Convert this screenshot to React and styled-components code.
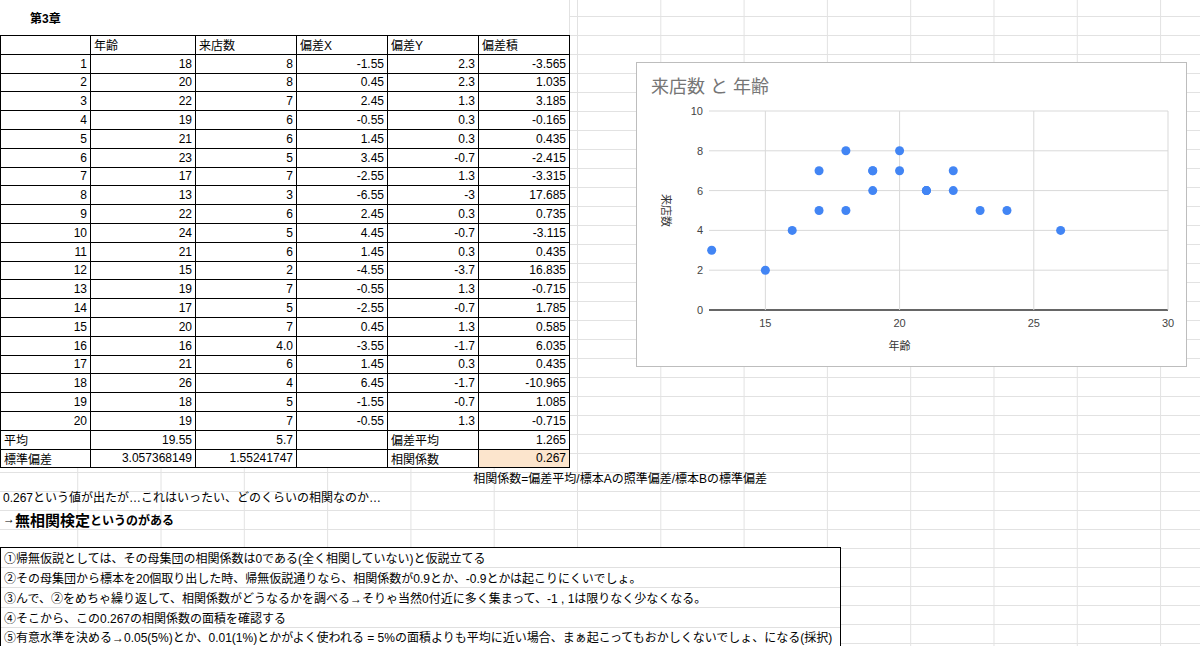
import React from "react";
import styled, { createGlobalStyle } from "styled-components";

const Global = createGlobalStyle`
  body { margin: 0; background: #fff; font-family: "Liberation Sans", "Noto Sans CJK JP", sans-serif; font-size: 12px; color: #000; }
`;

const ages = [18,20,22,19,21,23,17,13,22,24,21,15,19,17,20,16,21,26,18,19];
const visits = ["8","8","7","6","6","5","7","3","6","5","6","2","7","5","7","4.0","6","4","5","7"];
const dx = ["-1.55","0.45","2.45","-0.55","1.45","3.45","-2.55","-6.55","2.45","4.45","1.45","-4.55","-0.55","-2.55","0.45","-3.55","1.45","6.45","-1.55","-0.55"];
const dy = ["2.3","2.3","1.3","0.3","0.3","-0.7","1.3","-3","0.3","-0.7","0.3","-3.7","1.3","-0.7","1.3","-1.7","0.3","-1.7","-0.7","1.3"];
const pr = ["-3.565","1.035","3.185","-0.165","0.435","-2.415","-3.315","17.685","0.735","-3.115","0.435","16.835","-0.715","1.785","0.585","6.035","0.435","-10.965","1.085","-0.715"];

const Page = styled.div`
  position: relative;
  width: 1200px;
  height: 646px;
  overflow: hidden;
  background-image:
    linear-gradient(to right, #e2e2e2 1px, transparent 1px),
    linear-gradient(to bottom, #e2e2e2 1px, transparent 1px);
  background-size: 83.3px 19px, 100% 19px;
  background-position: 577px 0, 0 -3px;
`;
const TitleRow = styled.div`
  height: 35px;
  display: flex;
  align-items: center;
  padding-left: 30px;
  font-weight: bold;
  font-size: 12px;
  background: #fff;
  width: 539px;
  border-right: 1px solid #e2e2e2;
`;
const Table = styled.div`
  display: grid;
  grid-template-columns: 90px 105px 101px 91px 91px 91px;
  grid-auto-rows: 18.8px;
  border-top: 1px solid #000;
  border-left: 1px solid #000;
  width: fit-content;
  background: #fff;
`;
const Cell = styled.div`
  border-right: 1px solid #000;
  border-bottom: 1px solid #000;
  padding: 0 3px;
  display: flex;
  align-items: center;
  justify-content: ${p => (p.$left ? "flex-start" : "flex-end")};
  background: ${p => p.$bg || "#fff"};
  white-space: nowrap;
  overflow: hidden;
  font-size: 12px;
`;
const Line = styled.div`
  height: ${p => p.$h || 19}px;
  display: flex;
  align-items: center;
  padding-left: ${p => p.$pl ?? 3}px;
  width: ${p => p.$w || "auto"};
  justify-content: ${p => (p.$right ? "flex-end" : "flex-start")};
  font-size: 12px;
  white-space: nowrap;
`;
const Big = styled.span`
  font-weight: bold;
  font-size: 15px;
`;
const Small = styled.span`
  font-weight: bold;
  font-size: 12px;
`;
const Box = styled.div`
  margin-top: 15px;
  width: 839px;
  border: 1px solid #000;
  background: #fff;
`;
const BoxRow = styled.div`
  height: 18.8px;
  display: flex;
  align-items: center;
  padding-left: 3px;
  border-bottom: 1px solid #e0e0e0;
  &:last-child { border-bottom: none; }
  white-space: nowrap;
`;
const ChartCard = styled.div`
  position: absolute;
  left: 636px;
  top: 62px;
  width: 549px;
  height: 303px;
  background: #fff;
  border: 1px solid #bdbdbd;
`;

const X0 = 708, X1 = 1167, XMIN = 12.9, XMAX = 30;
const Y0 = 309, Y1 = 110;
const sx = v => X0 - 636 + ((v - XMIN) / (XMAX - XMIN)) * (X1 - X0);
const sy = v => Y0 - 62 - (v / 10) * (Y0 - Y1);

function Chart() {
  const ys = [0, 2, 4, 6, 8, 10];
  const xs = [15, 20, 25, 30];
  return (
    <ChartCard>
      <svg width="549" height="303" style={{ display: "block" }}>
        <text x="14" y="30" fontSize="18" fill="#757575" fontFamily="Liberation Sans, Noto Sans CJK JP, sans-serif">来店数 と 年齢</text>
        {ys.map(v => (
          <g key={v}>
            <line x1={X0 - 636} x2={X1 - 636} y1={sy(v)} y2={sy(v)} stroke={v === 0 ? "#333" : "#d9d9d9"} strokeWidth={v === 0 ? 1.5 : 1} />
            <text x={X0 - 642} y={sy(v) + 4} fontSize="11" textAnchor="end" fill="#444" fontFamily="Liberation Sans, sans-serif">{v}</text>
          </g>
        ))}
        {xs.map(v => (
          <g key={v}>
            <line x1={sx(v)} x2={sx(v)} y1={sy(10)} y2={sy(0)} stroke="#d9d9d9" />
            <text x={sx(v)} y={sy(0) + 17} fontSize="11" textAnchor="middle" fill="#444" fontFamily="Liberation Sans, sans-serif">{v}</text>
          </g>
        ))}
        <text x={sx(20)} y="287" fontSize="11" textAnchor="middle" fill="#333" fontFamily="Liberation Sans, Noto Sans CJK JP, sans-serif">年齢</text>
        <text transform={`translate(25 ${sy(5)}) rotate(90)`} fontSize="11" textAnchor="middle" fill="#333" fontFamily="Liberation Sans, Noto Sans CJK JP, sans-serif">来店数</text>
        {ages.map((a, i) => (
          <circle key={i} cx={sx(a)} cy={sy(parseFloat(visits[i]))} r="4.5" fill="#4285f4" />
        ))}
      </svg>
    </ChartCard>
  );
}

export default function App() {
  return (
    <Page>
      <Global />
      <TitleRow>第3章</TitleRow>
      <Table>
        <Cell />
        <Cell $left>年齢</Cell>
        <Cell $left>来店数</Cell>
        <Cell $left>偏差X</Cell>
        <Cell $left>偏差Y</Cell>
        <Cell $left>偏差積</Cell>
        {ages.map((a, i) => (
          <React.Fragment key={i}>
            <Cell>{i + 1}</Cell>
            <Cell>{a}</Cell>
            <Cell>{visits[i]}</Cell>
            <Cell>{dx[i]}</Cell>
            <Cell>{dy[i]}</Cell>
            <Cell>{pr[i]}</Cell>
          </React.Fragment>
        ))}
        <Cell $left>平均</Cell>
        <Cell>19.55</Cell>
        <Cell>5.7</Cell>
        <Cell />
        <Cell $left>偏差平均</Cell>
        <Cell>1.265</Cell>
        <Cell $left>標準偏差</Cell>
        <Cell>3.057368149</Cell>
        <Cell>1.55241747</Cell>
        <Cell />
        <Cell $left>相関係数</Cell>
        <Cell $bg="#fce5cd">0.267</Cell>
      </Table>
      <Line $right $w="767px" $pl={0}>相関係数=偏差平均/標本Aの照準偏差/標本Bの標準偏差</Line>
      <Line>0.267という値が出たが…これはいったい、どのくらいの相関なのか…</Line>
      <Line $h={26}><Small>→</Small><Big>無相関検定</Big><Small>というのがある</Small></Line>
      <Box>
        <BoxRow>①帰無仮説としては、その母集団の相関係数は0である(全く相関していない)と仮説立てる</BoxRow>
        <BoxRow>②その母集団から標本を20個取り出した時、帰無仮説通りなら、相関係数が0.9とか、-0.9とかは起こりにくいでしょ。</BoxRow>
        <BoxRow>③んで、②をめちゃ繰り返して、相関係数がどうなるかを調べる→そりゃ当然0付近に多く集まって、-1 , 1は限りなく少なくなる。</BoxRow>
        <BoxRow>④そこから、この0.267の相関係数の面積を確認する</BoxRow>
        <BoxRow>⑤有意水準を決める→0.05(5%)とか、0.01(1%)とかがよく使われる = 5%の面積よりも平均に近い場合、まぁ起こってもおかしくないでしょ、になる(採択)</BoxRow>
      </Box>
      <Chart />
    </Page>
  );
}
